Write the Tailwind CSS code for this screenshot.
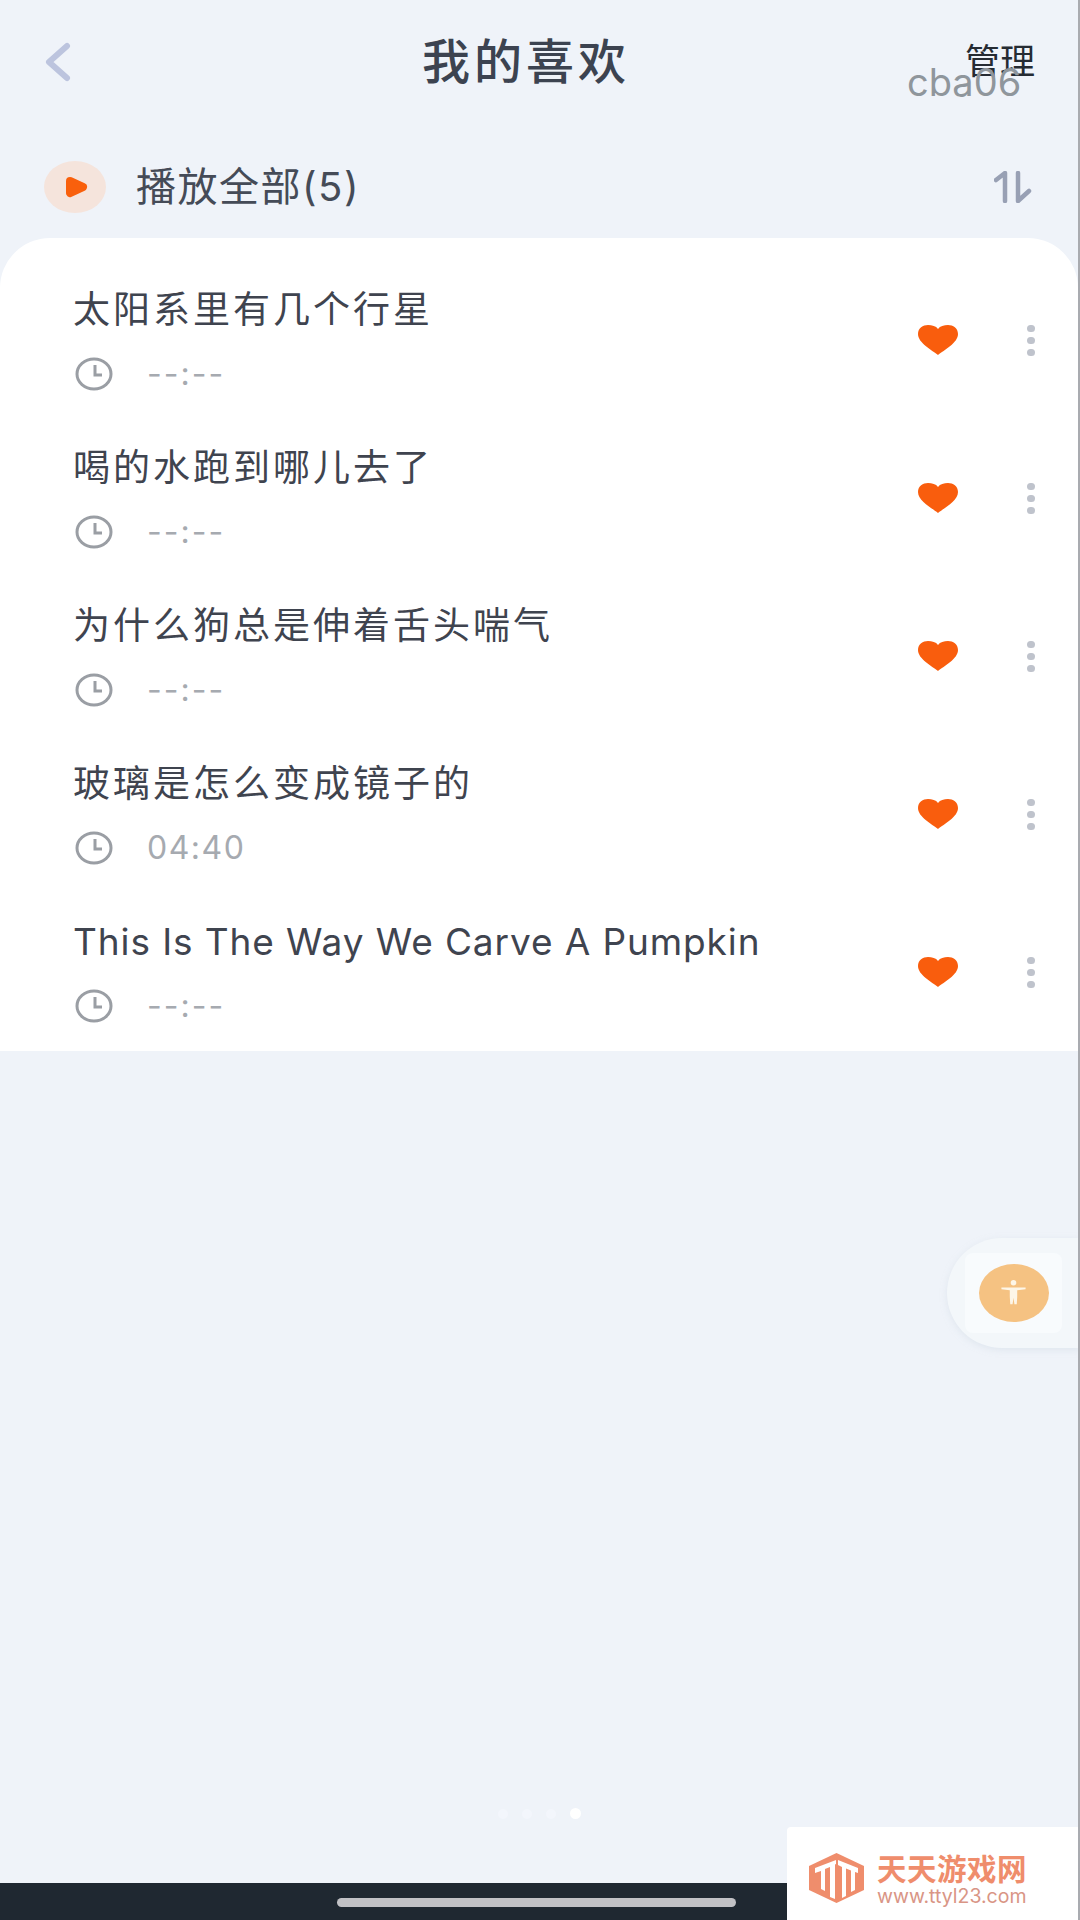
<!DOCTYPE html>
<html lang="zh-CN">
<head>
  <meta charset="UTF-8">
  <meta name="viewport" content="width=device-width, initial-scale=1.0">
  <title>我的喜欢</title>
  <script src="https://cdn.jsdelivr.net/npm/@tailwindcss/browser@4"></script>
</head>
<body class="bg-[#eff3f9] font-['Inter','Noto_Sans_CJK_SC',sans-serif] text-[#3a3f4a]">
  <div class="relative w-[1080px] h-[1920px] overflow-hidden flex flex-col border-r-2 border-[#a9abb0]">

    <!-- header -->
    <header class="relative h-[122px] shrink-0 flex items-center justify-between pl-[43px] pr-[43px]">
      <svg class="w-[30px] h-[40px] mt-[2px]" viewBox="0 0 30 40" fill="none" stroke="#bcc4de" stroke-width="6" stroke-linecap="round" stroke-linejoin="round"><path d="M24 4 L6 20 L24 36"/></svg>
      <h1 class="absolute left-0 right-[26px] text-center text-[48px] leading-none tracking-[4px] font-medium text-[#3c4350] mt-[1px]">我的喜欢</h1>
      <span class="text-[35px] leading-none text-[#252b33]">管理</span>
      <span class="absolute left-[907px] top-[60px] text-[38px] leading-[44px] text-[#8f969c]">cba06</span>
    </header>

    <!-- play all -->
    <div class="h-[116px] shrink-0 flex items-center justify-between pl-[44px] pr-[46px] pt-[14px]">
      <div class="flex items-center gap-[30px]">
        <div class="w-[62px] h-[52px] rounded-[50%] bg-[#f5e4dc] flex items-center justify-center">
          <svg class="w-[24px] h-[22px] ml-[3px]" viewBox="0 0 24 22"><path d="M5 5 L18 11 L5 17 Z" fill="#f9600c" stroke="#f9600c" stroke-width="8" stroke-linejoin="round"/></svg>
        </div>
        <span class="text-[40px] leading-none tracking-[1.500px] text-[#454b57]">播放全部(5)</span>
      </div>
      <svg class="w-[38px] h-[32px]" viewBox="0 0 38 32" fill="none" stroke="#98a0b4" stroke-width="4.500" stroke-linecap="round" stroke-linejoin="round"><path d="M2 9 L11 2 V30"/><path d="M24 2 V30 L35 20"/></svg>
    </div>

    <!-- song list -->
    <ul class="h-[813px] shrink-0 bg-white rounded-t-[50px] pt-[21px]">
      <li class="h-[158px] flex items-center justify-between pl-[73px] pr-[43px]">
        <div class="pt-[3px]">
          <p class="text-[37px] leading-[50px] tracking-[3px] text-[#3f444f]">太阳系里有几个行星</p>
          <div class="flex items-center gap-[34px] mt-[19px] h-[40px] pl-[2px]">
            <svg class="w-[38px] h-[34px]" viewBox="0 0 38 34" fill="none" stroke="#9a9ea4" stroke-width="3"><ellipse cx="19" cy="17" rx="17" ry="15"/><path d="M20 8 V18 H27"/></svg>
            <span class="text-[32px] leading-none tracking-[2px] text-[#a6aab0]">--:--</span>
          </div>
        </div>
        <div class="flex items-center gap-[69px] mt-[4px]">
          <svg class="w-[40px] h-[30px]" viewBox="0 0 40 30"><path d="M20 30 C14 25 0 18 0 9 C0 3 5 0 10 0 C14 0 18 1 20 4 C22 1 26 0 30 0 C35 0 40 3 40 9 C40 18 26 25 20 30 Z" fill="#f95d0d"/></svg>
          <div class="flex flex-col gap-[5px]"><i class="block w-[8px] h-[7px] rounded-full bg-[#bfc3cc]"></i><i class="block w-[8px] h-[7px] rounded-full bg-[#bfc3cc]"></i><i class="block w-[8px] h-[7px] rounded-full bg-[#bfc3cc]"></i></div>
        </div>
      </li>
      <li class="h-[158px] flex items-center justify-between pl-[73px] pr-[43px]">
        <div class="pt-[3px]">
          <p class="text-[37px] leading-[50px] tracking-[3px] text-[#3f444f]">喝的水跑到哪儿去了</p>
          <div class="flex items-center gap-[34px] mt-[19px] h-[40px] pl-[2px]">
            <svg class="w-[38px] h-[34px]" viewBox="0 0 38 34" fill="none" stroke="#9a9ea4" stroke-width="3"><ellipse cx="19" cy="17" rx="17" ry="15"/><path d="M20 8 V18 H27"/></svg>
            <span class="text-[32px] leading-none tracking-[2px] text-[#a6aab0]">--:--</span>
          </div>
        </div>
        <div class="flex items-center gap-[69px] mt-[4px]">
          <svg class="w-[40px] h-[30px]" viewBox="0 0 40 30"><path d="M20 30 C14 25 0 18 0 9 C0 3 5 0 10 0 C14 0 18 1 20 4 C22 1 26 0 30 0 C35 0 40 3 40 9 C40 18 26 25 20 30 Z" fill="#f95d0d"/></svg>
          <div class="flex flex-col gap-[5px]"><i class="block w-[8px] h-[7px] rounded-full bg-[#bfc3cc]"></i><i class="block w-[8px] h-[7px] rounded-full bg-[#bfc3cc]"></i><i class="block w-[8px] h-[7px] rounded-full bg-[#bfc3cc]"></i></div>
        </div>
      </li>
      <li class="h-[158px] flex items-center justify-between pl-[73px] pr-[43px]">
        <div class="pt-[3px]">
          <p class="text-[37px] leading-[50px] tracking-[3px] text-[#3f444f]">为什么狗总是伸着舌头喘气</p>
          <div class="flex items-center gap-[34px] mt-[19px] h-[40px] pl-[2px]">
            <svg class="w-[38px] h-[34px]" viewBox="0 0 38 34" fill="none" stroke="#9a9ea4" stroke-width="3"><ellipse cx="19" cy="17" rx="17" ry="15"/><path d="M20 8 V18 H27"/></svg>
            <span class="text-[32px] leading-none tracking-[2px] text-[#a6aab0]">--:--</span>
          </div>
        </div>
        <div class="flex items-center gap-[69px] mt-[4px]">
          <svg class="w-[40px] h-[30px]" viewBox="0 0 40 30"><path d="M20 30 C14 25 0 18 0 9 C0 3 5 0 10 0 C14 0 18 1 20 4 C22 1 26 0 30 0 C35 0 40 3 40 9 C40 18 26 25 20 30 Z" fill="#f95d0d"/></svg>
          <div class="flex flex-col gap-[5px]"><i class="block w-[8px] h-[7px] rounded-full bg-[#bfc3cc]"></i><i class="block w-[8px] h-[7px] rounded-full bg-[#bfc3cc]"></i><i class="block w-[8px] h-[7px] rounded-full bg-[#bfc3cc]"></i></div>
        </div>
      </li>
      <li class="h-[158px] flex items-center justify-between pl-[73px] pr-[43px]">
        <div class="pt-[3px]">
          <p class="text-[37px] leading-[50px] tracking-[3px] text-[#3f444f]">玻璃是怎么变成镜子的</p>
          <div class="flex items-center gap-[34px] mt-[19px] h-[40px] pl-[2px]">
            <svg class="w-[38px] h-[34px]" viewBox="0 0 38 34" fill="none" stroke="#9a9ea4" stroke-width="3"><ellipse cx="19" cy="17" rx="17" ry="15"/><path d="M20 8 V18 H27"/></svg>
            <span class="text-[32px] leading-none tracking-[1.500px] text-[#a6aab0]">04:40</span>
          </div>
        </div>
        <div class="flex items-center gap-[69px] mt-[4px]">
          <svg class="w-[40px] h-[30px]" viewBox="0 0 40 30"><path d="M20 30 C14 25 0 18 0 9 C0 3 5 0 10 0 C14 0 18 1 20 4 C22 1 26 0 30 0 C35 0 40 3 40 9 C40 18 26 25 20 30 Z" fill="#f95d0d"/></svg>
          <div class="flex flex-col gap-[5px]"><i class="block w-[8px] h-[7px] rounded-full bg-[#bfc3cc]"></i><i class="block w-[8px] h-[7px] rounded-full bg-[#bfc3cc]"></i><i class="block w-[8px] h-[7px] rounded-full bg-[#bfc3cc]"></i></div>
        </div>
      </li>
      <li class="h-[158px] flex items-center justify-between pl-[73px] pr-[43px]">
        <div class="pt-[3px]">
          <p class="text-[37px] leading-[50px] tracking-[0.900px] text-[#3f444f]">This Is The Way We Carve A Pumpkin</p>
          <div class="flex items-center gap-[34px] mt-[19px] h-[40px] pl-[2px]">
            <svg class="w-[38px] h-[34px]" viewBox="0 0 38 34" fill="none" stroke="#9a9ea4" stroke-width="3"><ellipse cx="19" cy="17" rx="17" ry="15"/><path d="M20 8 V18 H27"/></svg>
            <span class="text-[32px] leading-none tracking-[2px] text-[#a6aab0]">--:--</span>
          </div>
        </div>
        <div class="flex items-center gap-[69px] mt-[4px]">
          <svg class="w-[40px] h-[30px]" viewBox="0 0 40 30"><path d="M20 30 C14 25 0 18 0 9 C0 3 5 0 10 0 C14 0 18 1 20 4 C22 1 26 0 30 0 C35 0 40 3 40 9 C40 18 26 25 20 30 Z" fill="#f95d0d"/></svg>
          <div class="flex flex-col gap-[5px]"><i class="block w-[8px] h-[7px] rounded-full bg-[#bfc3cc]"></i><i class="block w-[8px] h-[7px] rounded-full bg-[#bfc3cc]"></i><i class="block w-[8px] h-[7px] rounded-full bg-[#bfc3cc]"></i></div>
        </div>
      </li>
    </ul>

    <!-- empty area with page dots -->
    <div class="flex-1 flex items-end justify-center pb-[64px]">
      <div class="flex items-center gap-[14px]">
        <i class="block w-[10px] h-[10px] rounded-full bg-[#f3f6fc]"></i>
        <i class="block w-[10px] h-[10px] rounded-full bg-[#f3f6fc]"></i>
        <i class="block w-[10px] h-[10px] rounded-full bg-[#f3f6fc]"></i>
        <i class="block w-[11px] h-[11px] rounded-full bg-white"></i>
      </div>
    </div>

    <!-- system bar -->
    <div class="h-[37px] shrink-0 bg-[#1f2831] flex justify-start items-start pl-[337px] pt-[15px]">
      <div class="w-[399px] h-[9px] rounded-full bg-[#c1c1c5]"></div>
    </div>

    <!-- floating accessibility button -->
    <div class="absolute left-[947px] top-[1238px] w-[133px] h-[110px] rounded-l-[55px] bg-[#f3f7fa] shadow-[0_2px_6px_rgba(210,220,230,0.5)] flex items-center pl-[18px]">
      <div class="w-[97px] h-[80px] rounded-[8px] bg-[#f8fbfd] flex items-center justify-center">
        <div class="w-[70px] h-[58px] rounded-[50%] bg-[#f5c282] flex items-center justify-center">
          <svg class="w-[25px] h-[26px]" viewBox="0 0 26 28" fill="#fdf6e8"><circle cx="13" cy="3" r="3"/><path d="M0 8 H26 V10 L17 11 V18 L16.500 26 H14 L13 19 L12 26 H9.500 L9 18 V11 L0 10 Z"/></svg>
        </div>
      </div>
    </div>

    <!-- watermark -->
    <div class="absolute left-[787px] top-[1827px] w-[293px] h-[93px] rounded-tl-[4px] bg-white flex items-start pl-[22px] pt-[26px] gap-[13px]">
      <svg class="w-[55px] h-[50px] shrink-0" viewBox="0 0 55 50">
        <path d="M27.500 0 L55 13 V37 L27.500 50 L0 37 V13 Z" fill="#ef8d6c"/>
        <path d="M6 15 L27 7 V11 L26 11.500 V46 L21 44 V14 L16 16 V38 L12 36 V18 L6 20 Z" fill="#fff"/>
        <path d="M29 7 L49 15 V20 L46 19 V37 L42 39 V17.500 L37 15.500 V43 L33 45 V14 L29 12 Z" fill="#fff"/>
      </svg>
      <div class="pt-[3px]">
        <p class="text-[29.500px] leading-[26px] font-bold tracking-[0.500px] text-[#ef8d6c] whitespace-nowrap">天天游戏网</p>
        <p class="text-[19.500px] leading-[22px] mt-[3px] text-[#d99585] whitespace-nowrap">www.ttyl23.com</p>
      </div>
    </div>
  </div>
</body>
</html>
